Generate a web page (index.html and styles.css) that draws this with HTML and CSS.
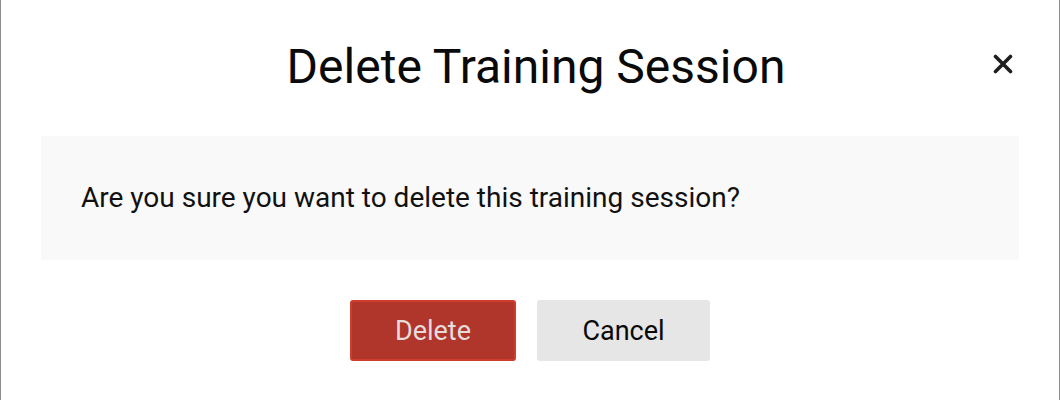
FILE: index.html
```html
<!DOCTYPE html>
<html lang="en">
<head>
<meta charset="utf-8">
<title>Delete Training Session</title>
<link rel="stylesheet" href="styles.css">
</head>
<body>
  <div class="dialog">
    <header class="dialog-header">
      <h1 class="dialog-title">Delete Training Session</h1>
      <button class="close-btn" type="button" aria-label="Close">
        <svg width="20" height="20" viewBox="0 0 20 20" aria-hidden="true">
          <path d="M2.5 2.5 L17.5 17.5 M17.5 2.5 L2.5 17.5" stroke="#1f1f1f" stroke-width="3.6" stroke-linecap="round" fill="none"/>
        </svg>
      </button>
    </header>
    <div class="dialog-body">
      <p class="dialog-message">Are you sure you want to delete this training session?</p>
    </div>
    <footer class="dialog-actions">
      <button class="btn btn-danger" type="button">Delete</button>
      <button class="btn btn-secondary" type="button">Cancel</button>
    </footer>
  </div>
</body>
</html>
```
FILE: styles.css
```css
html, body {
  margin: 0;
  padding: 0;
  background: #ffffff;
}

body {
  font-family: Roboto, "Liberation Sans", Arial, sans-serif;
  color: #111111;
}

.dialog {
  height: 400px;
  box-sizing: border-box;
  border-left: 1px solid #8c8c8c;
  border-right: 1px solid #8c8c8c;
  padding: 38px 40px 0 40px;
}

.dialog-header {
  display: flex;
  align-items: center;
  padding-left: 42px;
}

.dialog-title {
  flex: 1;
  margin: 0;
  text-align: center;
  font-weight: 400;
  font-size: 48px;
  line-height: 58px;
  color: #0a0a0a;
}

.close-btn {
  display: flex;
  align-items: center;
  justify-content: center;
  width: 28px;
  height: 28px;
  margin-right: 2px;
  margin-top: -6px;
  padding: 0;
  border: 0;
  background: transparent;
  cursor: pointer;
}

.dialog-body {
  margin-top: 40px;
  background: #f9f9f9;
  padding: 45px 40px 46px 40px;
}

.dialog-message {
  margin: 0;
  font-size: 28px;
  line-height: 33px;
  color: #111111;
}

.dialog-actions {
  display: flex;
  justify-content: center;
  gap: 21px;
  margin-top: 40px;
}

.btn {
  height: 61px;
  box-sizing: border-box;
  border-radius: 3px;
  font-family: inherit;
  font-size: 27px;
  cursor: pointer;
}

.btn-danger {
  width: 166px;
  background: #b0352a;
  border: 2px solid #d03d2e;
  color: #e6dcdb;
}

.btn-secondary {
  width: 173px;
  background: #e6e6e6;
  border: 0;
  color: #0a0a0a;
}
```
